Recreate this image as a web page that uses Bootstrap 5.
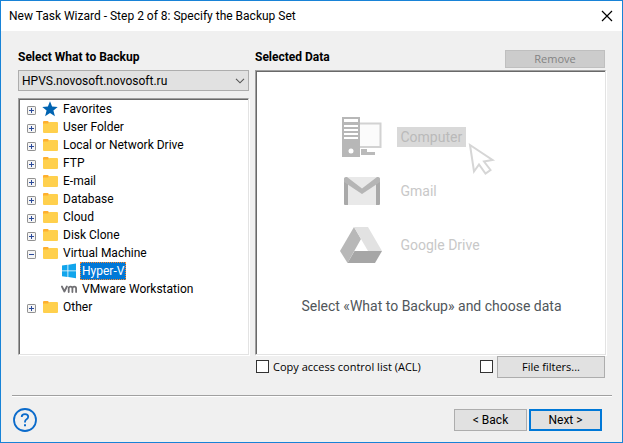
<!DOCTYPE html>
<html lang="en">
<head>
<meta charset="utf-8">
<meta name="viewport" content="width=device-width, initial-scale=1">
<title>New Task Wizard</title>
<link href="https://cdn.jsdelivr.net/npm/bootstrap@5.3.0/dist/css/bootstrap.min.css" rel="stylesheet">
<style>
body { font-family: Roboto, "Open Sans", sans-serif; font-size: 12px; line-height: 18px; color: #000; background: #f0f0f0; }
.wizard { border: 1px solid #1883d7; }
.title-bar { height: 30px; padding: 0 8px; }
.title-bar h1 { font-size: 12px; line-height: 18px; }
.close-btn { width: 14px; height: 14px; }
.panes { display: grid; grid-template-columns: 231fr 351fr; grid-template-rows: 1fr auto; column-gap: 6px; padding: 17px 16px 0 17px; }
.pane-head { height: 22px; }
.pane-head h2 { font-size: 12px; line-height: 18px; }
.win-btn { font-size: 12px; line-height: 14px; height: 22px; color: #000; background: #e1e1e1; border: 1px solid #adadad; border-radius: 0; padding: 0; }
.win-btn:hover { background: #e5f1fb; border-color: #0078d7; }
.remove-btn, .remove-btn:disabled { width: 100px; height: 18px; margin: 2px 1px 0 0; font-family: "Open Sans", sans-serif; font-size: 11px; color: #838383; background: #ccc; border-color: #bfbfbf; opacity: 1; }
.filter-btn { width: 108px; font-size: 11px; font-family: inherit; }
.nav-btn { width: 73px; }
.default-btn { border: 2px solid #0078d7; }
.nav-pair { gap: 2px; }
.source-select { height: 21px; font-size: 12px; line-height: 18px; color: #000; border: 1px solid #adadad; border-radius: 0; padding: 1px 20px 0 3px; margin-bottom: 7px;
  background: #e1e1e1 url("data:image/svg+xml,%3Csvg xmlns='http://www.w3.org/2000/svg' viewBox='0 0 10 6'%3E%3Cpath d='M1 .8l4 4 4-4' fill='none' stroke='%23555' stroke-width='1.1'/%3E%3C/svg%3E") no-repeat right 3px center / 10px 6px; }
.sunken { background: #fff; border: 1px solid; border-color: #a0a0a0 #e3e3e3 #e3e3e3 #a0a0a0; box-shadow: inset 1px 1px #696969, 1px 1px #fff; }
.tree { padding: 1px 0 0 8px; }
.tree-row { height: 18px; gap: 5px; }
.tree-row svg { flex: none; }
.expander { width: 9px; height: 9px; margin: 2px 1px 0 0; }
.subtree { padding-left: 34px; }
.subtree .tree-row { gap: 3px; }
.tree-label { padding: 0 2px; line-height: 18px; }
.picked { color: #fff; background: #0078d7; outline: 1px dotted #ff8728; outline-offset: -1px; }
.hint { padding: 39px 0 0 2px; }
.sources { width: 184px; grid-template-columns: 42px 1fr; grid-auto-rows: 54px; column-gap: 15px; color: #c8c8c8; font-size: 14px; line-height: 20px; }
.source-chip { padding: 0 4px; }
.source-on { background: #d9d9d9; color: #bababa; }
.pointer { left: 100%; top: 15px; }
.hint-text { font-size: 14px; line-height: 20px; color: #50565a; margin-top: 24px; }
.opt { width: 13px; height: 13px; margin: 0; border: 1px solid #333; border-radius: 0 !important; }
.options-row { height: 24px; padding: 0 1px 1px; font-family: "Open Sans", sans-serif; font-size: 11px; }
.wizard-foot { margin: 16px 10px 0 11px; border-top: 1px solid #a0a0a0; box-shadow: inset 0 1px #fff; padding: 12px 10px 10px 1px; }
</style>
<script src="https://cdn.jsdelivr.net/npm/bootstrap@5.3.0/dist/js/bootstrap.bundle.min.js"></script>
</head>
<body>
<svg class="d-none" aria-hidden="true">
  <symbol id="plus" viewBox="0 0 9 9"><rect x=".5" y=".5" width="8" height="8" rx=".6" fill="#f5f5f5" stroke="#919191"/><path d="M2 4.500h5M4.500 2v5" stroke="#2b4a9a"/></symbol>
  <symbol id="minus" viewBox="0 0 9 9"><rect x=".5" y=".5" width="8" height="8" rx=".6" fill="#f5f5f5" stroke="#919191"/><path d="M2 4.500h5" stroke="#2b4a9a"/></symbol>
  <symbol id="folder" viewBox="0 0 16 16"><path d="M1 3q0-1 1-1h4l1 1.500V6H1z" fill="#ffb02e"/><path d="M1 5q0-.5.5-.5h4.500L7.500 3H15q1 0 1 1v9q0 1-1 1H2q-1 0-1-1z" fill="#ffd04d"/></symbol>
</svg>
<div class="wizard min-vh-100 d-flex flex-column">
  <header class="title-bar bg-white d-flex align-items-center justify-content-between">
    <h1 class="m-0 fw-normal">New Task Wizard - Step 2 of 8: Specify the Backup Set</h1>
    <button type="button" class="close-btn btn p-0 border-0 d-flex align-items-center justify-content-center" aria-label="Close"><svg width="12" height="12" viewBox="0 0 12 12"><path d="M1 1l10 10M11 1L1 11" stroke="#000" stroke-width="1.200"/></svg></button>
  </header>
  <main class="panes flex-grow-1">
    <section class="d-flex flex-column">
      <div class="pane-head"><h2 class="m-0 fw-bold"><label for="source">Select What to Backup</label></h2></div>
      <select id="source" class="form-select source-select"><option>HPVS.novosoft.novosoft.ru</option></select>
      <ul class="tree sunken list-unstyled flex-grow-1 m-0">
        <li class="tree-row d-flex align-items-center"><button type="button" class="expander btn p-0 border-0 d-flex" aria-label="Expand Favorites"><svg width="9" height="9"><use href="#plus"/></svg></button><svg width="16" height="16" viewBox="0 0 16 16"><path d="M8 .3l2.100 5.200 5.600.4-4.300 3.600 1.500 5.700L8 12.100l-4.900 3.100 1.500-5.700L.3 5.900l5.600-.4z" fill="#0063b1"/></svg><span>Favorites</span></li>
        <li class="tree-row d-flex align-items-center"><button type="button" class="expander btn p-0 border-0 d-flex" aria-label="Expand User Folder"><svg width="9" height="9"><use href="#plus"/></svg></button><svg width="16" height="16"><use href="#folder"/></svg><span>User Folder</span></li>
        <li class="tree-row d-flex align-items-center"><button type="button" class="expander btn p-0 border-0 d-flex" aria-label="Expand Local or Network Drive"><svg width="9" height="9"><use href="#plus"/></svg></button><svg width="16" height="16"><use href="#folder"/></svg><span>Local or Network Drive</span></li>
        <li class="tree-row d-flex align-items-center"><button type="button" class="expander btn p-0 border-0 d-flex" aria-label="Expand FTP"><svg width="9" height="9"><use href="#plus"/></svg></button><svg width="16" height="16"><use href="#folder"/></svg><span>FTP</span></li>
        <li class="tree-row d-flex align-items-center"><button type="button" class="expander btn p-0 border-0 d-flex" aria-label="Expand E-mail"><svg width="9" height="9"><use href="#plus"/></svg></button><svg width="16" height="16"><use href="#folder"/></svg><span>E-mail</span></li>
        <li class="tree-row d-flex align-items-center"><button type="button" class="expander btn p-0 border-0 d-flex" aria-label="Expand Database"><svg width="9" height="9"><use href="#plus"/></svg></button><svg width="16" height="16"><use href="#folder"/></svg><span>Database</span></li>
        <li class="tree-row d-flex align-items-center"><button type="button" class="expander btn p-0 border-0 d-flex" aria-label="Expand Cloud"><svg width="9" height="9"><use href="#plus"/></svg></button><svg width="16" height="16"><use href="#folder"/></svg><span>Cloud</span></li>
        <li class="tree-row d-flex align-items-center"><button type="button" class="expander btn p-0 border-0 d-flex" aria-label="Expand Disk Clone"><svg width="9" height="9"><use href="#plus"/></svg></button><svg width="16" height="16"><use href="#folder"/></svg><span>Disk Clone</span></li>
        <li>
          <div class="tree-row d-flex align-items-center"><button type="button" class="expander btn p-0 border-0 d-flex" aria-label="Collapse Virtual Machine"><svg width="9" height="9"><use href="#minus"/></svg></button><svg width="16" height="16"><use href="#folder"/></svg><span>Virtual Machine</span></div>
          <ul class="subtree list-unstyled m-0">
            <li class="tree-row d-flex align-items-center"><svg width="16" height="16" viewBox="0 0 16 16" fill="#12a5ec"><path d="M1 2.600l5.500-.8v5.700H1zM7.300 1.700L15 .6v6.900H7.300zM1 8.300h5.500V14L1 13.200zM7.300 8.300H15v6.900l-7.700-1.100z"/></svg><span class="tree-label picked">Hyper-V</span></li>
            <li class="tree-row d-flex align-items-center"><svg width="16" height="16" viewBox="0 0 16 16" fill="none" stroke="#717074" stroke-width="1.800" stroke-linecap="round" stroke-linejoin="round"><path d="M.9 5.500l2.500 5 2.500-5M7.700 11V7.400q0-1.800 1.900-1.800 1.800 0 1.800 1.800V11M11.400 7.400q0-1.800 1.900-1.800 1.800 0 1.800 1.800V11"/></svg><span class="tree-label">VMware Workstation</span></li>
          </ul>
        </li>
        <li class="tree-row d-flex align-items-center"><button type="button" class="expander btn p-0 border-0 d-flex" aria-label="Expand Other"><svg width="9" height="9"><use href="#plus"/></svg></button><svg width="16" height="16"><use href="#folder"/></svg><span>Other</span></li>
      </ul>
    </section>
    <section class="d-flex flex-column">
      <div class="pane-head d-flex align-items-start justify-content-between"><h2 class="m-0 fw-bold">Selected Data</h2><button type="button" class="btn win-btn remove-btn" disabled>Remove</button></div>
      <div class="hint sunken flex-grow-1">
        <div class="sources d-grid mx-auto align-items-center">
          <svg width="42" height="42" viewBox="0 0 42 42"><path d="M19 7.500h21.500V31H19z" fill="#fbfbfb" stroke="#d2d2d2" stroke-width="2"/><path d="M21 33h6v3h8v3H21z" fill="#bababa"/><path d="M2 1h18v40H2z" fill="#b7b7b7"/><path d="M4 3h14v3H4zM4 9h14v2H4zM4 13h14v2H4zM4 17h14v2H4zM4 21h14v2H4z" fill="#fff"/><circle cx="11" cy="35" r="2.500" fill="#fff"/></svg>
          <div class="position-relative me-auto"><span class="source-chip source-on d-block">Computer</span>
            <svg class="pointer position-absolute" width="30" height="34" viewBox="0 0 30 34"><path d="M4 3l22.500 15-8.500 1.500 6.500 8.500-5 3.500-6.500-9-5 7z" fill="#fff" stroke="#d6d6d6" stroke-width="2"/></svg></div>
          <svg width="42" height="30" viewBox="0 0 42 30"><path d="M5 1h34v28H5z" fill="#e9e9e9"/><path d="M4 5l4 2v22H5q-1 0-1-1zM40 5l-4 2v22h3q1 0 1-1z" fill="#a9a9a9"/><path d="M4 2.500Q4 1 6 1h1l15 11.500L37 1h1q2 0 2 1.500V6L22 18 4 6z" fill="#b5b5b5"/></svg>
          <span class="source-chip">Gmail</span>
          <svg width="42" height="36" viewBox="0 0 42 36"><path d="M14 0l7 12L7.500 36 0 24z" fill="#b8b8b8"/><path d="M14 0h14l14 24H28z" fill="#e2e2e2"/><path d="M14.500 24H42l-7 12H7.500z" fill="#a6a6a6"/></svg>
          <span class="source-chip text-nowrap">Google Drive</span>
        </div>
        <p class="hint-text text-center mb-0">Select «What to Backup» and choose data</p>
      </div>
    </section>
    <div></div>
    <div class="options-row d-flex align-items-center">
      <input type="checkbox" id="acl" class="form-check-input opt"><label for="acl" class="ms-1">Copy access control list (ACL)</label>
      <input type="checkbox" class="form-check-input opt ms-auto me-1" aria-label="Use file filters"><button type="button" class="btn win-btn filter-btn">File filters...</button>
    </div>
  </main>
  <footer class="wizard-foot d-flex align-items-center justify-content-between">
    <button type="button" class="btn p-0 border-0 d-flex" aria-label="Help"><svg width="24" height="24" viewBox="0 0 24 24" fill="none" stroke="#0b6bcb"><circle cx="12" cy="12" r="11" stroke-width="1.800"/><path d="M8.700 9q0-2.800 3.300-2.800 3.200 0 3.200 2.600 0 1.500-1.600 2.500T12 13.800v.7" stroke-width="1.800"/><path d="M12 16.200v2" stroke-width="2"/></svg></button>
    <div class="nav-pair d-flex">
      <button type="button" class="btn win-btn nav-btn">&lt; Back</button>
      <button type="button" class="btn win-btn nav-btn default-btn">Next &gt;</button>
    </div>
  </footer>
</div>
</body>
</html>
